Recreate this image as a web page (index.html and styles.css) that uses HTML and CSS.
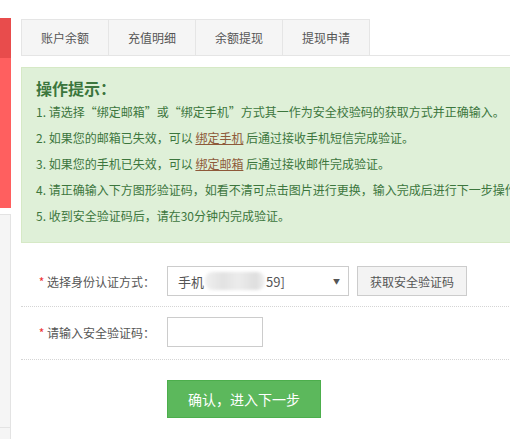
FILE: index.html
```html
<!DOCTYPE html>
<html lang="zh-CN">
<head>
    <meta charset="UTF-8">
    <title>安全验证</title>
    <link rel="stylesheet" href="styles.css">
</head>
<body>
  <div class="page">
    <div class="sidebar">
      <div class="side-top"></div>
      <div class="side-active"></div>
      <div class="side-red"></div>
      <div class="side-menu">
        <div class="side-menu-item"></div>
      </div>
    </div>

    <div class="main">
      <ul class="tabs">
        <li>账户余额</li>
        <li>充值明细</li>
        <li>余额提现</li>
        <li>提现申请</li>
      </ul>

      <div class="tips">
        <h3>操作提示：</h3>
        <p>1. 请选择“绑定邮箱”或“绑定手机”方式其一作为安全校验码的获取方式并正确输入。</p>
        <p>2. 如果您的邮箱已失效，可以 <a href="#">绑定手机</a> 后通过接收手机短信完成验证。</p>
        <p>3. 如果您的手机已失效，可以 <a href="#">绑定邮箱</a> 后通过接收邮件完成验证。</p>
        <p>4. 请正确输入下方图形验证码，如看不清可点击图片进行更换，输入完成后进行下一步操作。</p>
        <p>5. 收到安全验证码后，请在30分钟内完成验证。</p>
      </div>

      <div class="form">
        <div class="form-row">
          <label><span class="req">*</span> 选择身份认证方式：</label>
          <div class="select">
            <span>手机</span><span class="masked"></span><span>59]</span>
            <span class="arrow">▼</span>
          </div>
          <button class="btn-code">获取安全验证码</button>
        </div>
        <div class="form-row">
          <label><span class="req">*</span> 请输入安全验证码：</label>
          <input type="text" class="code-input">
        </div>
        <div class="form-submit">
          <button class="btn-next">确认，进入下一步</button>
        </div>
      </div>
    </div>
  </div>
</body>
</html>
```

FILE: styles.css
```css
html, body {
    margin: 0;
    padding: 0;
    overflow: hidden;
    background: #fff;
    font-family: "Noto Sans CJK SC", "Liberation Sans", sans-serif;
    font-size: 12px;
    color: #555;
}
.page {
    display: flex;
    height: 439px;
}
.sidebar {
    width: 11px;
    flex: none;
    display: flex;
    flex-direction: column;
}
.side-top {
    height: 18px;
}
.side-active {
    height: 40px;
    background: #e84c4c;
}
.side-red {
    height: 150px;
    background: #ff5f5f;
}
.side-menu {
    margin-top: 6px;
    flex: 1;
    background: #f5f5f5;
    border-top: 1px solid #e3e3e3;
    border-right: 1px solid #e3e3e3;
}
.side-menu-item {
    height: 212px;
    border-bottom: 1px solid #e3e3e3;
}
.main {
    flex: none;
    width: 580px;
    margin-left: 10px;
    padding-top: 19px;
}
.tabs {
    list-style: none;
    margin: 0;
    padding: 0;
    display: flex;
    border-bottom: 1px solid #e5e5e5;
}
.tabs li {
    width: 86px;
    height: 35px;
    line-height: 35px;
    text-align: center;
    background: #f5f5f5;
    border: 1px solid #e5e5e5;
    border-bottom: none;
    margin-right: -1px;
    color: #555;
}
.tips {
    margin-top: 11px;
    background: #dff0d8;
    border: 1px solid #d6e9c6;
    padding: 9px 14px 13px;
    color: #3c763d;
    white-space: nowrap;
}
.tips h3 {
    margin: 0;
    font-size: 16px;
    line-height: 22px;
    font-weight: bold;
}
.tips p {
    margin: 0;
    line-height: 26px;
}
.tips a {
    color: #8e5a3a;
    text-decoration: underline;
}
.form {
    margin-top: 12px;
}
.form-row {
    display: flex;
    align-items: center;
    padding: 11px 0 10px;
    border-bottom: 1px dotted #d5d5d5;
}
.form-row + .form-row {
    padding-top: 10px;
    padding-bottom: 12px;
}
.form-row label {
    width: 134px;
    margin-right: 12px;
    text-align: right;
    color: #555;
}
.req {
    color: #e33;
}
.select {
    position: relative;
    box-sizing: border-box;
    width: 182px;
    height: 30px;
    border: 1px solid #ccc;
    padding-left: 10px;
    display: flex;
    align-items: center;
    color: #555;
    font-size: 13px;
}
.masked {
    width: 60px;
    height: 18px;
    margin: 0 1px;
    background: linear-gradient(90deg, #f0f0f0, #e2e2e2 30%, #ececec 55%, #dedede 85%, #f2f2f2);
    border-radius: 8px;
    filter: blur(1.5px);
}
.arrow {
    position: absolute;
    right: 8px;
    top: 9px;
    font-size: 7px;
    color: #555;
}
.btn-code {
    margin-left: 8px;
    width: 110px;
    height: 30px;
    background: #f3f3f3;
    border: 1px solid #ccc;
    font-family: inherit;
    font-size: 12px;
    color: #555;
    cursor: pointer;
}
.code-input {
    box-sizing: border-box;
    width: 96px;
    height: 30px;
    border: 1px solid #ccc;
    margin: 0;
}
.form-submit {
    padding: 20px 0 0 146px;
}
.btn-next {
    width: 154px;
    height: 38px;
    background: #5cb85c;
    border: 1px solid #4cae4c;
    color: #fff;
    font-family: inherit;
    font-size: 14px;
    cursor: pointer;
}
```
